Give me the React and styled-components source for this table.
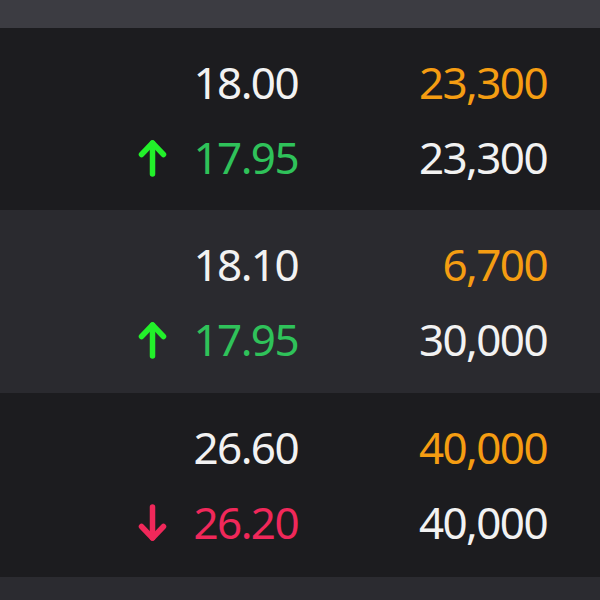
import React from "react";
import styled, { createGlobalStyle } from "styled-components";

const Global = createGlobalStyle`
  html, body {
    margin: 0;
    padding: 0;
    background: #2b2b30;
  }
  body {
    font-family: "Noto Sans", "Open Sans", sans-serif;
  }
`;

const Board = styled.div`
  width: 600px;
  height: 600px;
  display: flex;
  flex-direction: column;
  overflow: hidden;
`;

const TopStrip = styled.div`
  height: 28px;
  background: #3c3c42;
  flex-shrink: 0;
`;

const BottomStrip = styled.div`
  flex: 1;
  background: #2b2b30;
`;

const Row = styled.div`
  height: ${(p) => p.h}px;
  box-sizing: border-box;
  background: ${(p) => (p.alt ? "#2a2a2f" : "#1c1c1f")};
  display: grid;
  grid-template-columns: 298px 1fr;
  grid-auto-rows: 75px;
  padding: 17px 53px 0 0;
  flex-shrink: 0;
`;

const Cell = styled.div`
  display: flex;
  align-items: center;
  justify-content: flex-end;
  gap: 27px;
  font-size: 44px;
  line-height: 75px;
  letter-spacing: -1.6px;
  color: ${(p) => p.color || "#f2f2f2"};
`;

const Arrow = styled.svg`
  width: 29px;
  height: 38px;
  flex-shrink: 0;
`;

const colors = {
  white: "#f2f2f2",
  orange: "#f59d12",
  up: "#2fc25a",
  down: "#f0285a",
};

const UpArrow = () => (
  <Arrow viewBox="0 0 29 38">
    <g stroke="#22f02a" strokeWidth="5.5" strokeLinecap="round" strokeLinejoin="round" fill="none">
      <path d="M14.5 4 L14.5 35" />
      <path d="M3.5 15.5 L14.5 4 L25.5 15.5" />
    </g>
  </Arrow>
);

const DownArrow = () => (
  <Arrow viewBox="0 0 29 38">
    <g stroke="#f0285a" strokeWidth="5.5" strokeLinecap="round" strokeLinejoin="round" fill="none">
      <path d="M14.5 3 L14.5 34" />
      <path d="M3.5 22.5 L14.5 34 L25.5 22.5" />
    </g>
  </Arrow>
);

const rows = [
  { h: 182, alt: false, price: "18.00", qty: "23,300", last: "17.95", lastQty: "23,300", dir: "up" },
  { h: 183, alt: true, price: "18.10", qty: "6,700", last: "17.95", lastQty: "30,000", dir: "up" },
  { h: 184, alt: false, price: "26.60", qty: "40,000", last: "26.20", lastQty: "40,000", dir: "down" },
];

export default function App() {
  return (
    <>
      <Global />
      <Board>
        <TopStrip />
        {rows.map((r, i) => (
          <Row key={i} h={r.h} alt={r.alt}>
            <Cell>{r.price}</Cell>
            <Cell color={colors.orange}>{r.qty}</Cell>
            <Cell color={r.dir === "up" ? colors.up : colors.down}>
              {r.dir === "up" ? <UpArrow /> : <DownArrow />}
              {r.last}
            </Cell>
            <Cell>{r.lastQty}</Cell>
          </Row>
        ))}
        <BottomStrip />
      </Board>
    </>
  );
}
